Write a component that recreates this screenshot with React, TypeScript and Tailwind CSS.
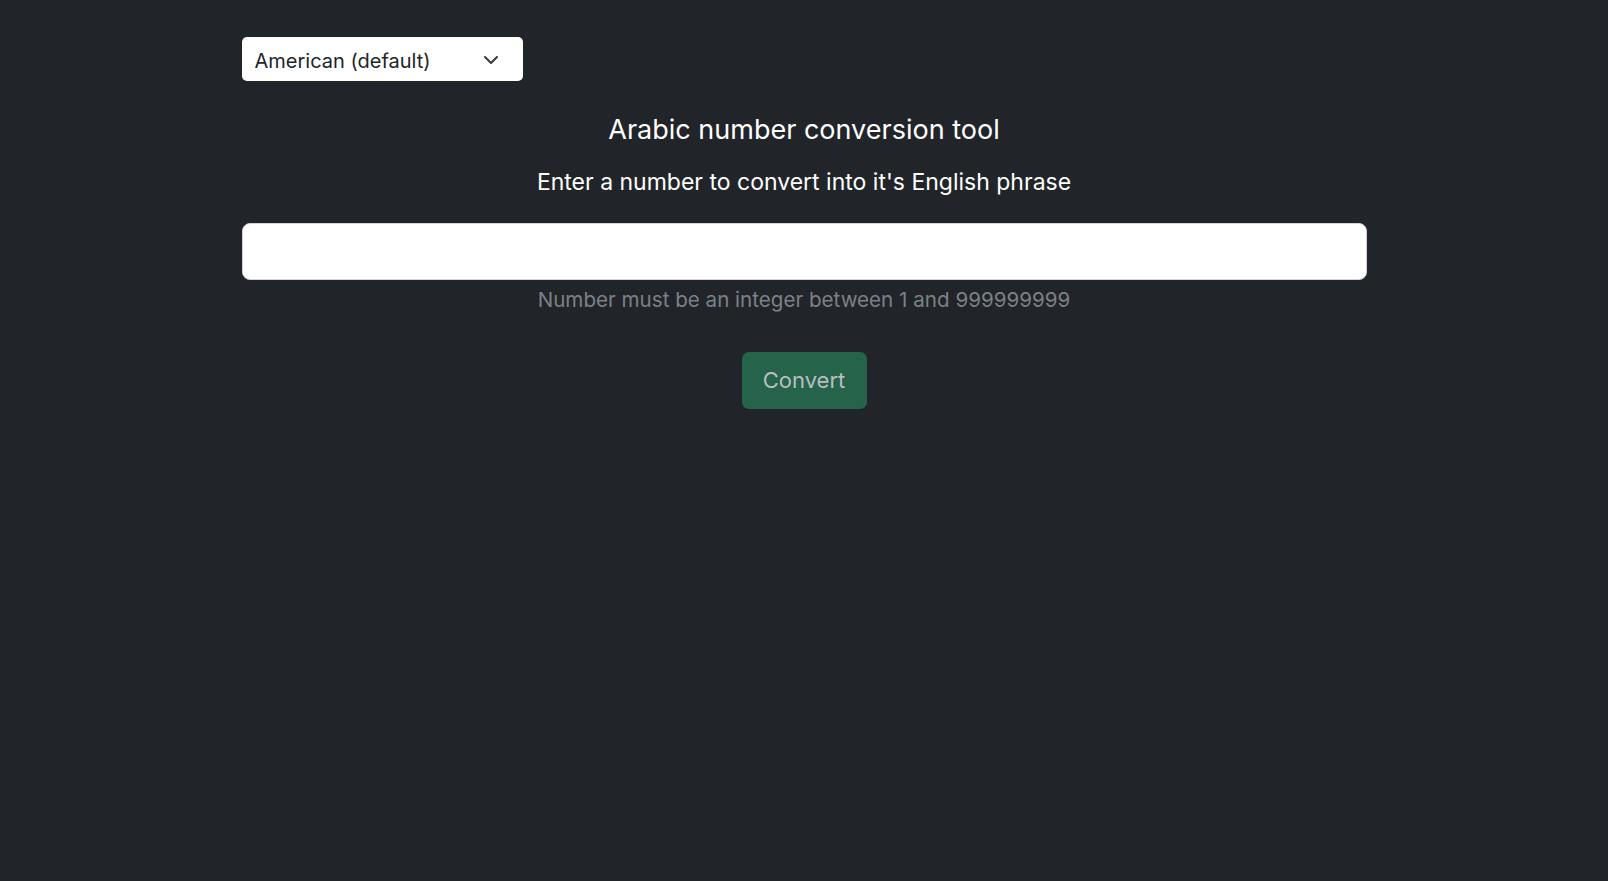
import { useState } from "react";

export default function App() {
  const [dialect, setDialect] = useState("american");
  const [value, setValue] = useState("");

  return (
    <div className="min-h-screen bg-[#212529] font-['Inter',sans-serif] text-white">
      <div className="mx-auto w-[1125px] pt-[37px]">
        <div className="relative w-[281px]">
          <select
            value={dialect}
            onChange={(e) => setDialect(e.target.value)}
            className="h-[44px] w-full appearance-none rounded-[5px] bg-white pl-[13px] pt-[3px] text-[20px] text-[#212529] outline-none"
          >
            <option value="american">American (default)</option>
            <option value="british">British</option>
          </select>
          <svg
            className="pointer-events-none absolute right-[24px] top-[15px]"
            width="16"
            height="16"
            viewBox="0 0 16 16"
            fill="none"
            stroke="#343a40"
            strokeWidth="2"
            strokeLinecap="round"
            strokeLinejoin="round"
          >
            <path d="M2 5l6 6 6-6" />
          </svg>
        </div>

        <h1 className="mt-[30px] text-center text-[27px] leading-[38px]">
          Arabic number conversion tool
        </h1>
        <p className="mt-[18px] text-center text-[23px] leading-[30px]">
          Enter a number to convert into it's English phrase
        </p>

        <input
          type="text"
          value={value}
          onChange={(e) => setValue(e.target.value)}
          className="mt-[26px] block h-[57px] w-full rounded-[8px] border border-[#ced4da] bg-white px-4 text-[22px] text-[#212529] outline-none"
        />
        <p className="mt-[5px] text-center text-[20.6px] leading-[30px] text-[#7b8187]">
          Number must be an integer between 1 and 999999999
        </p>

        <div className="mt-[37px] flex justify-center">
          <button
            disabled
            className="h-[57px] w-[125px] rounded-[7px] bg-[#25644b] text-[22px] text-[#b9bec1]"
          >
            Convert
          </button>
        </div>
      </div>
    </div>
  );
}
